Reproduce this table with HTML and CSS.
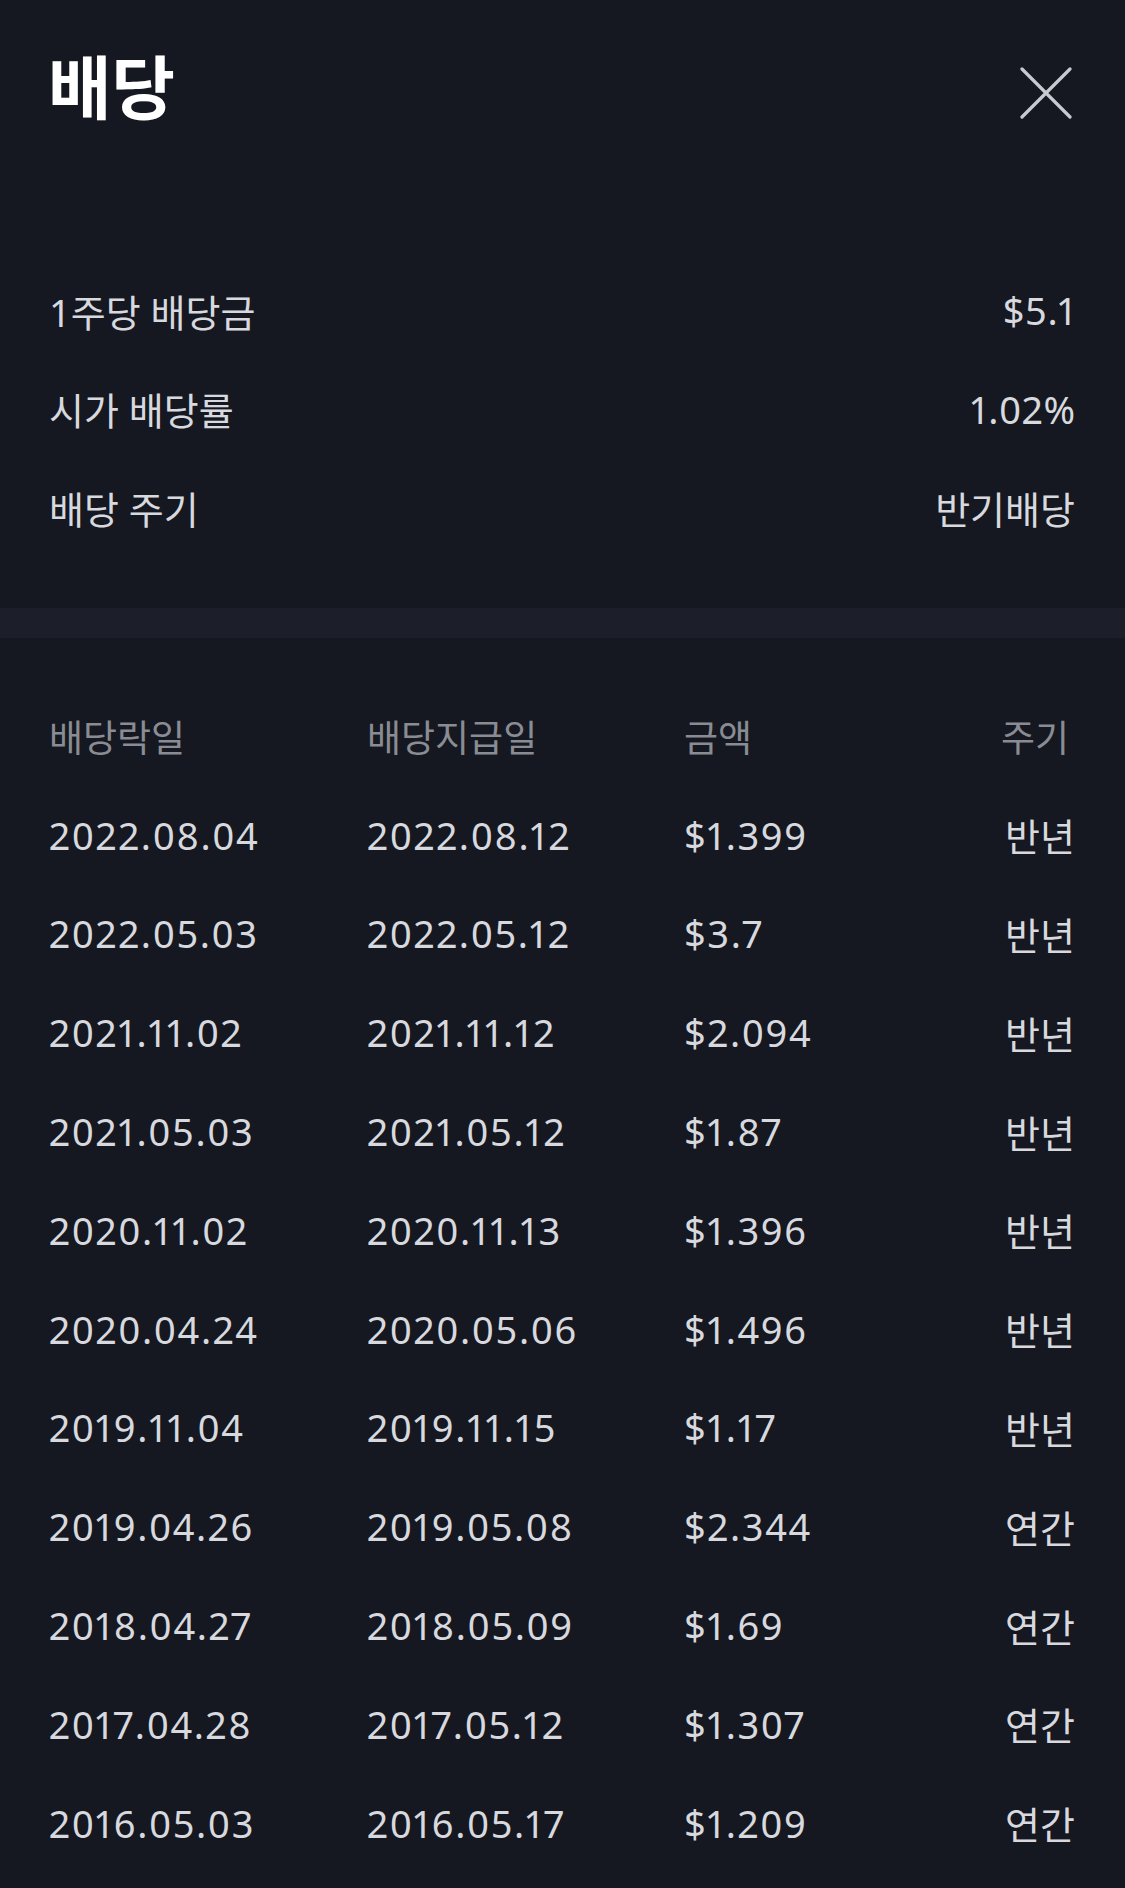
FILE: index.html
```html
<!DOCTYPE html>
<html lang="ko">
<head>
    <meta charset="UTF-8">
    <meta name="viewport" content="width=device-width, initial-scale=1.0">
    <title>배당</title>
    <link rel="stylesheet" href="styles.css">
</head>
<body>

<div class="header">
    <h1 class="title">배당</h1>
    <button class="close" aria-label="닫기">
        <svg width="52" height="52" viewBox="0 0 52 52">
            <path d="M2 2 L50 50 M50 2 L2 50" stroke="#c9cad1" stroke-width="3.2" stroke-linecap="round" fill="none"/>
        </svg>
    </button>
</div>

<div class="summary">
    <div class="summary-row"><span>1주당 배당금</span><span class="num">$5.1</span></div>
    <div class="summary-row"><span>시가 배당률</span><span class="num">1.02%</span></div>
    <div class="summary-row"><span>배당 주기</span><span>반기배당</span></div>
</div>

<div class="divider"></div>

<div class="history">
    <div class="row head">
        <span>배당락일</span><span>배당지급일</span><span>금액</span><span class="cycle">주기</span>
    </div>
    <div class="row"><span class="num">2022.08.04</span><span class="num">2022.08.12</span><span class="num">$1.399</span><span class="cycle">반년</span></div>
    <div class="row"><span class="num">2022.05.03</span><span class="num">2022.05.12</span><span class="num">$3.7</span><span class="cycle">반년</span></div>
    <div class="row"><span class="num">2021.11.02</span><span class="num">2021.11.12</span><span class="num">$2.094</span><span class="cycle">반년</span></div>
    <div class="row"><span class="num">2021.05.03</span><span class="num">2021.05.12</span><span class="num">$1.87</span><span class="cycle">반년</span></div>
    <div class="row"><span class="num">2020.11.02</span><span class="num">2020.11.13</span><span class="num">$1.396</span><span class="cycle">반년</span></div>
    <div class="row"><span class="num">2020.04.24</span><span class="num">2020.05.06</span><span class="num">$1.496</span><span class="cycle">반년</span></div>
    <div class="row"><span class="num">2019.11.04</span><span class="num">2019.11.15</span><span class="num">$1.17</span><span class="cycle">반년</span></div>
    <div class="row"><span class="num">2019.04.26</span><span class="num">2019.05.08</span><span class="num">$2.344</span><span class="cycle">연간</span></div>
    <div class="row"><span class="num">2018.04.27</span><span class="num">2018.05.09</span><span class="num">$1.69</span><span class="cycle">연간</span></div>
    <div class="row"><span class="num">2017.04.28</span><span class="num">2017.05.12</span><span class="num">$1.307</span><span class="cycle">연간</span></div>
    <div class="row"><span class="num">2016.05.03</span><span class="num">2016.05.17</span><span class="num">$1.209</span><span class="cycle">연간</span></div>
</div>

</body>
</html>
```

FILE: styles.css
```css
body {
    margin: 0;
    background-color: #151821;
    color: #d8d9de;
    font-family: "Noto Sans", "Noto Sans CJK KR", sans-serif;
}

.header {
    height: 261px;
    box-sizing: border-box;
    padding: 50px 53px 0 48px;
    display: flex;
    justify-content: space-between;
    align-items: flex-start;
}

.title {
    margin: 0;
    font-size: 69px;
    line-height: 74px;
    font-weight: 700;
    color: #ffffff;
}

.close {
    margin-top: 17px;
    padding: 0;
    border: none;
    background: none;
    width: 52px;
    height: 52px;
    cursor: pointer;
}

.summary {
    padding: 0 50px 0 49px;
}

.summary-row {
    height: 98.5px;
    display: flex;
    justify-content: space-between;
    align-items: center;
    font-size: 38px;
}

.num {
    letter-spacing: 1.6px;
    font-variant-numeric: proportional-nums;
}

.summary-row .num {
    letter-spacing: 0.6px;
    margin-right: -0.6px;
}

.divider {
    margin-top: 51px;
    height: 30px;
    background-color: #1c1f29;
}

.history {
    padding: 49px 50px 0 49px;
}

.row {
    height: 98.8px;
    display: grid;
    grid-template-columns: 318px 317px 1fr auto;
    align-items: center;
    font-size: 38px;
}

.row.head {
    color: #8a8c93;
    font-size: 37px;
}

.row.head .cycle {
    margin-right: 6px;
}

.cycle {
    text-align: right;
}
```
